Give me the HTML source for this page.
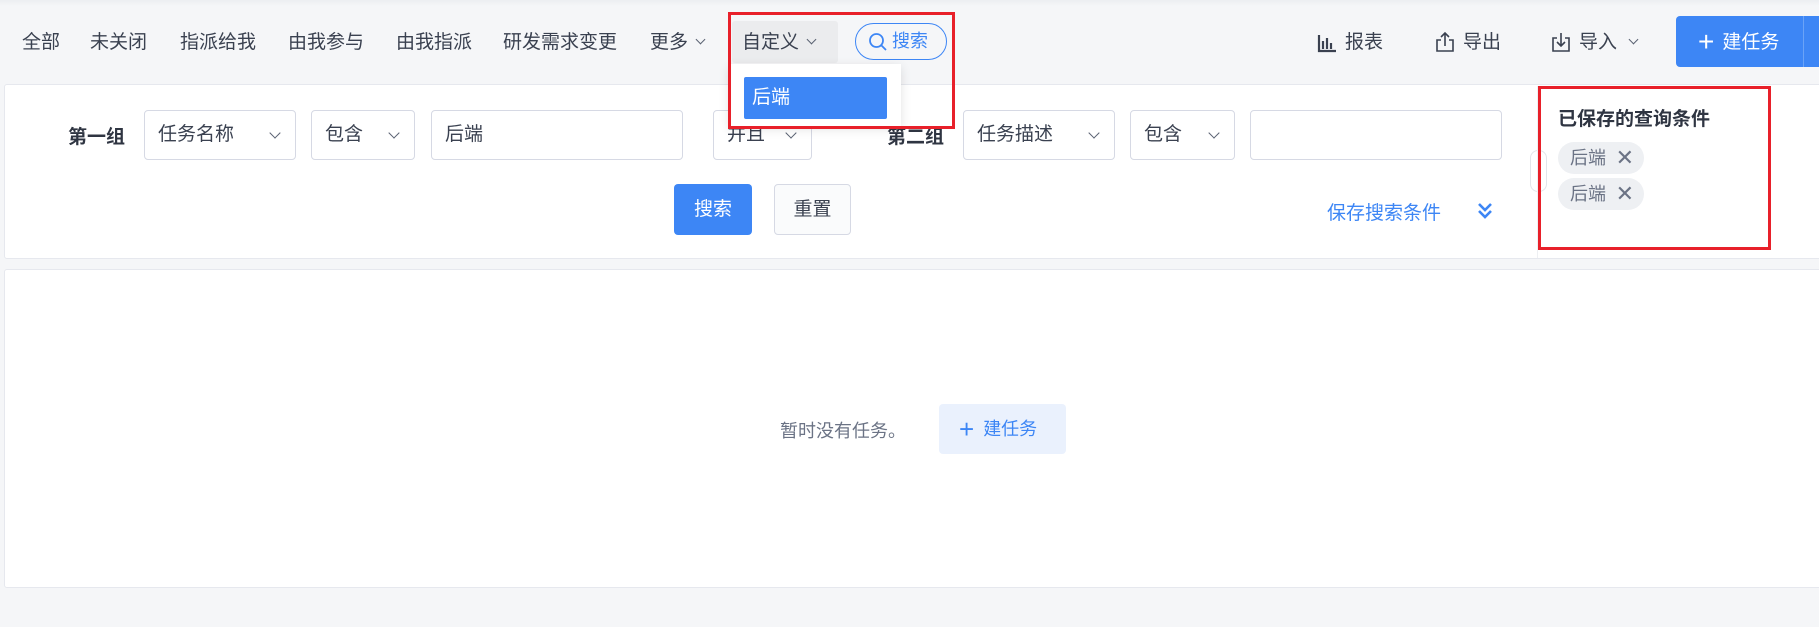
<!DOCTYPE html>
<html><head><meta charset="utf-8"><style>
*{box-sizing:border-box;margin:0;padding:0}
body{width:1819px;height:627px;background:#f5f6f8;font-family:"Liberation Sans","Noto Sans CJK SC",sans-serif;position:relative;overflow:hidden;color:#3a4150}
.a{position:absolute;white-space:nowrap}
.nav{font-size:19px;top:30px;line-height:26px;color:#3a4150}
.panel{position:absolute;background:#fff;border:1px solid #e6e8ee;border-radius:3px}
.sel{position:absolute;border:1px solid #d6d9e4;border-radius:4px;background:#fff;height:50px;font-size:19px;line-height:48px;padding-left:13px;color:#3a4150}
.sel .c{position:absolute;right:16px;top:18px;width:8px;height:8px;border-right:1.5px solid #5a6272;border-bottom:1.5px solid #5a6272;transform:rotate(45deg)}
.chev{display:inline-block;width:8px;height:8px;border-right:1.5px solid #5a6272;border-bottom:1.5px solid #5a6272;transform:rotate(45deg);}
.tag{position:absolute;left:1558px;width:86px;height:32px;border-radius:16px;background:#eef0f3;font-size:18px;line-height:32px;color:#6b7385;padding-left:12px}
.tag span{position:absolute;right:10px;top:0;font-size:22px;color:#6b7385}
</style></head><body>
<div class="a" style="left:0;top:0;width:1819px;height:6px;background:linear-gradient(#eceef1,#f5f6f8)"></div>
<div class="a nav" style="left:22px">全部</div>
<div class="a nav" style="left:90px">未关闭</div>
<div class="a nav" style="left:180px">指派给我</div>
<div class="a nav" style="left:288px">由我参与</div>
<div class="a nav" style="left:396px">由我指派</div>
<div class="a nav" style="left:503px">研发需求变更</div>
<div class="a nav" style="left:650px">更多 <i class="chev" style="margin:0 0 5px 4px;width:7px;height:7px"></i></div>
<div class="a" style="left:732px;top:21px;width:106px;height:42px;background:#ebecee;border-radius:3px"></div>
<div class="a nav" style="left:742px">自定义 <i class="chev" style="margin:0 0 5px 4px;width:7px;height:7px"></i></div>
<div class="a" style="left:855px;top:23px;width:92px;height:37px;border:1.5px solid #3d86f5;border-radius:19px;color:#3d86f5;font-size:18px;line-height:34px;padding-left:36px">搜索
<svg style="position:absolute;left:12px;top:8px" width="20" height="20" viewBox="0 0 20 20"><circle cx="8.5" cy="8.5" r="6.5" fill="none" stroke="#3d86f5" stroke-width="1.8"/><path d="M13 13l5 5" stroke="#3d86f5" stroke-width="1.8"/></svg></div>

<svg class="a" style="left:1317px;top:33px" width="20" height="20" viewBox="0 0 20 20"><path d="M2 2v16h17M6 8v8M10 5v11M14 10v6" stroke="#3a4150" stroke-width="2.2" fill="none"/></svg>
<div class="a nav" style="left:1345px">报表</div>
<svg class="a" style="left:1435px;top:31px" width="20" height="22" viewBox="0 0 20 22"><path d="M6 9H2v11h16V9h-4M10 15V2M6 6l4-4 4 4" stroke="#3a4150" stroke-width="1.6" fill="none"/></svg>
<div class="a nav" style="left:1463px">导出</div>
<svg class="a" style="left:1551px;top:31px" width="20" height="22" viewBox="0 0 20 22"><path d="M6 7H2v13h16V7h-4M10 2v13M6 11l4 4 4-4" stroke="#3a4150" stroke-width="1.6" fill="none"/></svg>
<div class="a nav" style="left:1579px">导入 <i class="chev" style="margin:0 0 5px 8px;width:7px;height:7px"></i></div>
<div class="a" style="left:1676px;top:16px;width:150px;height:51px;background:#3d86f5;border-radius:4px;color:#fff;font-size:19px;line-height:51px;padding-left:22px"><span style="font-size:28px;vertical-align:-3px;margin-right:8px;font-weight:300">+</span>建任务</div>
<div class="a" style="left:1803px;top:16px;width:1px;height:51px;background:#6aa3f7"></div>

<div class="panel" style="left:4px;top:84px;width:1830px;height:175px"></div>
<div class="a" style="left:68px;top:122px;font-size:19px;font-weight:bold;color:#2f3542">第一组</div>
<div class="sel" style="left:144px;top:110px;width:152px">任务名称<span class="c"></span></div>
<div class="sel" style="left:311px;top:110px;width:104px">包含<span class="c"></span></div>
<div class="sel" style="left:431px;top:110px;width:252px">后端</div>
<div class="sel" style="left:713px;top:110px;width:99px">并且<span class="c"></span></div>
<div class="a" style="left:887px;top:122px;font-size:19px;font-weight:bold;color:#2f3542">第二组</div>
<div class="sel" style="left:963px;top:110px;width:152px">任务描述<span class="c"></span></div>
<div class="sel" style="left:1130px;top:110px;width:105px">包含<span class="c"></span></div>
<div class="sel" style="left:1250px;top:110px;width:252px"></div>
<div class="a" style="left:674px;top:184px;width:78px;height:51px;background:#3d86f5;border-radius:4px;color:#fff;font-size:19px;line-height:51px;text-align:center">搜索</div>
<div class="a" style="left:774px;top:184px;width:77px;height:51px;background:#fafbfc;border:1px solid #d6d9e4;border-radius:4px;font-size:19px;line-height:49px;text-align:center">重置</div>
<div class="a" style="left:1327px;top:198px;font-size:19px;color:#3d86f5">保存搜索条件</div>
<svg class="a" style="left:1476px;top:200px" width="18" height="22" viewBox="0 0 18 22"><path d="M3 4l6 6 6-6M3 11l6 6 6-6" stroke="#3d86f5" stroke-width="2.6" fill="none"/></svg>
<div class="a" style="left:1530px;top:150px;width:17px;height:42px;border:1px solid #e2e4ea;border-radius:8px;background:#fff"></div>
<div class="a" style="left:1537px;top:86px;width:1px;height:172px;background:#eef0f3"></div>
<div class="a" style="left:1558px;top:104px;font-size:19px;font-weight:bold;color:#2f3542">已保存的查询条件</div>
<div class="tag" style="top:142px">后端<span>✕</span></div>
<div class="tag" style="top:178px">后端<span>✕</span></div>

<div class="panel" style="left:4px;top:269px;width:1830px;height:319px"></div>
<div class="a" style="left:780px;top:417px;font-size:18px;color:#6b7385">暂时没有任务。</div>
<div class="a" style="left:939px;top:404px;width:127px;height:50px;background:#eaf1fd;border-radius:4px;color:#3d86f5;font-size:18px;line-height:50px;padding-left:20px"><span style="font-size:26px;vertical-align:-3px;margin-right:9px;font-weight:300">+</span>建任务</div>

<div class="a" style="left:729px;top:64px;width:172px;height:62px;background:#fff;box-shadow:0 3px 10px rgba(0,0,0,.12)"></div>
<div class="a" style="left:744px;top:77px;width:143px;height:42px;background:#3d86f5;border-radius:2px;color:#fff;font-size:19px;line-height:42px;padding-left:8px">后端</div>

<div class="a" style="left:728px;top:12px;width:227px;height:117px;border:3px solid #e8202a"></div>
<div class="a" style="left:1538px;top:86px;width:233px;height:164px;border:3px solid #e8202a"></div>
</body></html>
